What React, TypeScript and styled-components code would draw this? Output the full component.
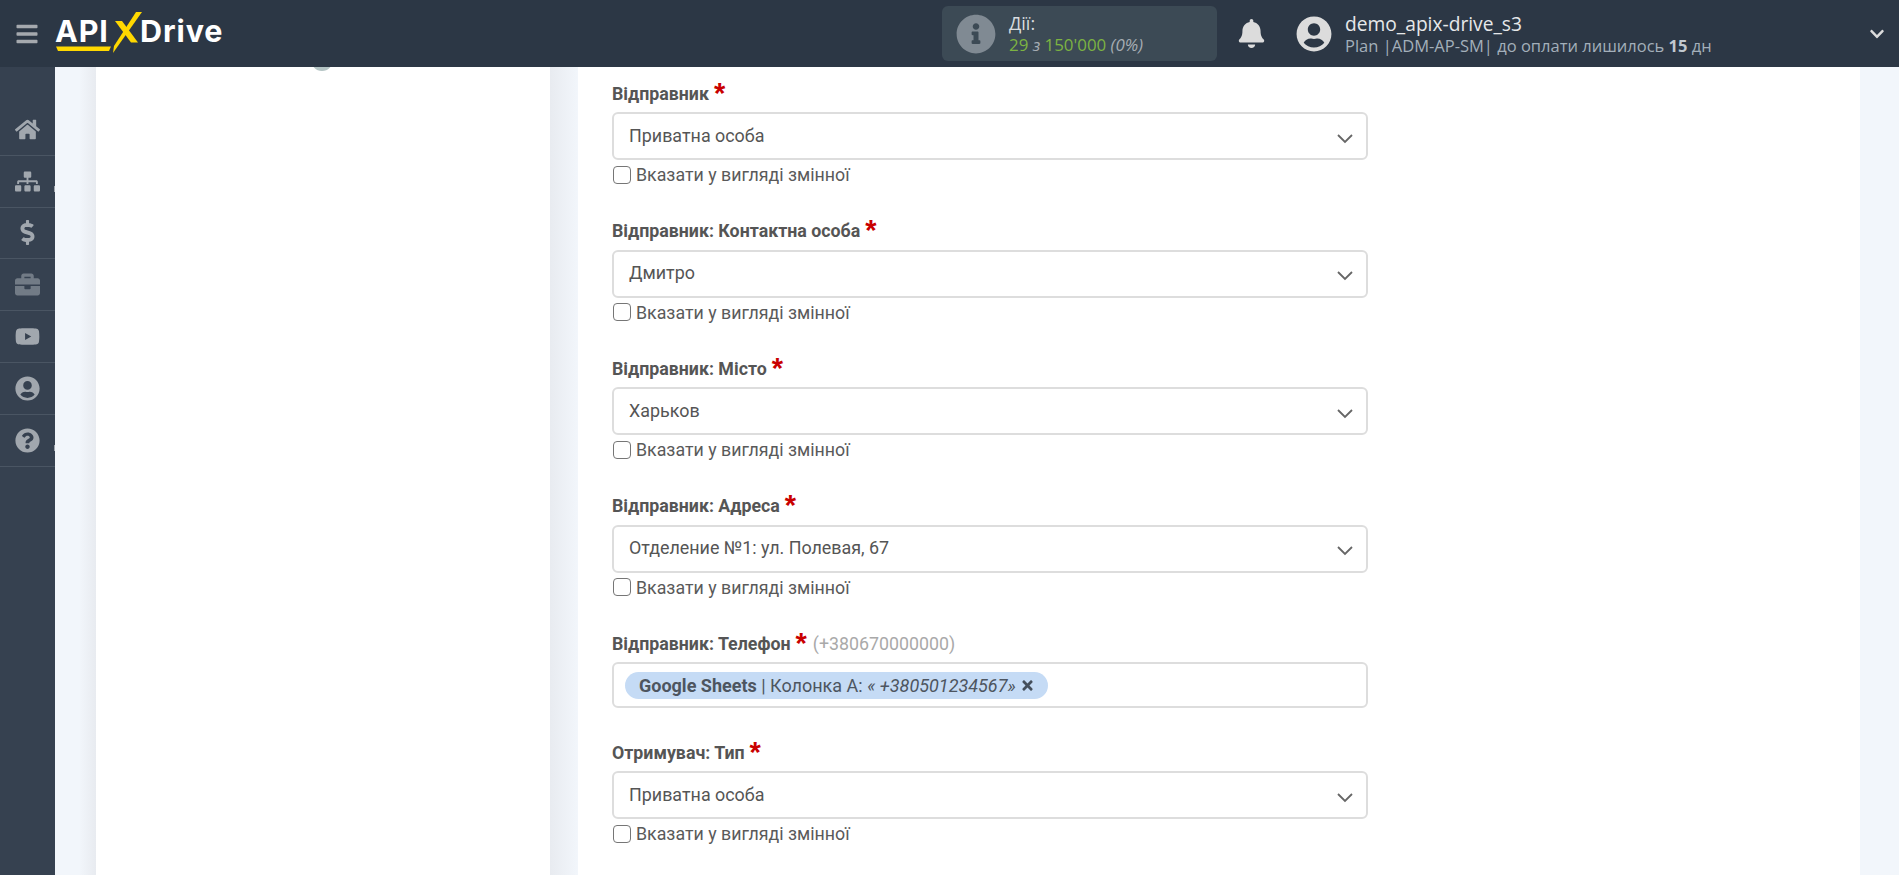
import React from "react";
import styled, { createGlobalStyle } from "styled-components";
import {
  FaBars,
  FaBell,
  FaBriefcase,
  FaChevronDown,
  FaDollarSign,
  FaHome,
  FaInfoCircle,
  FaQuestionCircle,
  FaSitemap,
  FaTimes,
  FaUserCircle,
  FaYoutube,
} from "react-icons/fa";

const Global = createGlobalStyle`
  html, body { margin: 0; padding: 0; height: 100%; overflow: hidden; }
  body { background: #f2f6fb; font-family: Roboto, "Liberation Sans", sans-serif; }
  * { box-sizing: border-box; }
`;

const Page = styled.div`
  width: 1899px;
  height: 875px;
  display: flex;
  flex-direction: column;
  overflow: hidden;
`;

const Header = styled.header`
  position: relative;
  z-index: 2;
  flex: 0 0 67px;
  display: flex;
  align-items: center;
  background: #2c3745;
  color: #fff;
`;

const Burger = styled.div`
  flex: 0 0 55px;
  display: flex;
  justify-content: center;
  color: #a5a9ae;
  font-size: 24px;
  line-height: 0;
  padding-right: 1px;
`;

const Logo = styled.div`
  position: relative;
  width: 176px;
  height: 46px;
  font-family: Inter, "Liberation Sans", sans-serif;
  font-weight: 700;
  font-size: 30.5px;
  letter-spacing: 0.9px;
  color: #fff;
`;

const LogoApi = styled.span`
  position: absolute;
  left: 0;
  top: 0;
  line-height: 40px;
`;

const LogoDrive = styled.span`
  position: absolute;
  left: 85px;
  top: 0;
  line-height: 40px;
`;

const LogoMark = styled.svg`
  position: absolute;
  left: 0;
  top: 0;
`;

const Actions = styled.div`
  margin-left: 711px;
  width: 275px;
  height: 55px;
  border-radius: 6px;
  background: #3c4a55;
  display: flex;
  align-items: center;
  padding-left: 14px;
  gap: 13px;
`;

const InfoIcon = styled.div`
  color: #808a93;
  font-size: 40px;
  line-height: 0;
`;

const ActionsText = styled.div`
  font-family: "Open Sans", sans-serif;
  font-size: 18px;
  line-height: 22px;
  color: #d8dcdf;
`;

const Counter = styled.div`
  color: #7cb342;
  font-size: 16.9px;
`;

const Muted = styled.em`
  color: #a6adb3;
  font-style: italic;
`;

const Bell = styled.div`
  margin-left: 20px;
  color: #dcdcdc;
  font-size: 29px;
  line-height: 0;
`;

const Avatar = styled.div`
  margin-left: 30px;
  color: #dcdcdc;
  font-size: 36px;
  line-height: 0;
`;

const UserInfo = styled.div`
  margin-left: 13px;
  flex: 1;
  font-family: "Open Sans", sans-serif;
`;

const UserName = styled.div`
  font-size: 19.2px;
  line-height: 24px;
  color: #e6e8ea;
`;

const UserPlan = styled.div`
  font-size: 16.5px;
  line-height: 20px;
  color: #a3afba;
  b {
    font-weight: 700;
    color: #c2c9d0;
  }
`;

const Caret = styled.div`
  color: #dcdcdc;
  font-size: 16px;
  line-height: 0;
  margin-right: 14px;
`;

const Body = styled.div`
  flex: 1;
  display: flex;
  min-height: 0;
`;

const Sidebar = styled.nav`
  flex: 0 0 55px;
  background: #364150;
  padding-top: 37px;
`;

const NavItem = styled.div<{ $dim?: boolean }>`
  position: relative;
  height: 51.8px;
  display: flex;
  align-items: center;
  justify-content: center;
  border-bottom: 1px solid #4a5563;
  color: ${(p) => (p.$dim ? "#727b86" : "#a1a7ae")};
  font-size: 25px;
  line-height: 0;
`;

const NavNotch = styled.span`
  position: absolute;
  right: 0;
  top: 30px;
  width: 1.5px;
  height: 6px;
  background: #a1a7ae;
`;

const Content = styled.main`
  flex: 1;
  min-width: 0;
  display: flex;
  padding: 0 39px 0 41px;
  gap: 28px;
  background: linear-gradient(90deg, #f2f6fb 0, #f2f6fb 24px, #e8ebf0 41px, #e8ebf0 495px, #f2f6fb 523px);
`;

const LeftPanel = styled.section`
  position: relative;
  flex: 0 0 454px;
  background: #fff;
`;

const StepDot = styled.span`
  position: absolute;
  left: 215px;
  top: -18px;
  width: 22px;
  height: 22px;
  border-radius: 50%;
  background: #b4c4c4;
`;

const FormPanel = styled.section`
  flex: 1;
  background: #fff;
  padding: 13px 0 0 34px;
`;

const Field = styled.div<{ $gap?: number }>`
  width: 756px;
  margin-bottom: ${(p) => p.$gap ?? 29.5}px;
`;

const Label = styled.div`
  height: 25px;
  margin-bottom: 7px;
  padding-top: 1px;
  display: flex;
  align-items: center;
  font-size: 17.8px;
  font-weight: 700;
  color: #555;
  white-space: nowrap;
`;

const Required = styled.span`
  color: #c90000;
  font-size: 29px;
  line-height: 25px;
  height: 25px;
  margin-left: 5px;
  font-weight: 700;
  font-family: "Liberation Sans", sans-serif;
`;

const Hint = styled.span`
  margin-left: 6px;
  font-weight: 400;
  color: #a9a9a9;
`;

const SelectBox = styled.div`
  height: 48px;
  border: 2px solid #dddddd;
  border-radius: 6px;
  background: #fff;
  display: flex;
  align-items: center;
  justify-content: space-between;
  padding: 0 13px 2px 15px;
  font-size: 17.9px;
  color: #555;
`;

const Chevron = styled.svg`
  flex: none;
  margin-top: 7.5px;
`;

const CheckRow = styled.label`
  height: 28px;
  padding-top: 1px;
  display: flex;
  align-items: center;
  gap: 5px;
  font-size: 17.8px;
  color: #5a5a5a;
`;

const CheckInput = styled.input`
  appearance: none;
  flex: none;
  width: 18px;
  height: 18px;
  margin: 0 0 0 1px;
  border: 1.5px solid #767676;
  border-radius: 4px;
  background: #fff;
`;

const TagBox = styled.div`
  height: 46px;
  border: 2px solid #dddddd;
  border-radius: 6px;
  display: flex;
  align-items: center;
  padding-left: 11px;
`;

const Tag = styled.div`
  height: 27px;
  border-radius: 14px;
  background: #c5dbf5;
  display: flex;
  align-items: center;
  padding: 0 13px 0 14px;
  font-size: 18px;
  color: #4d5560;
  white-space: pre;
  b { font-weight: 700; }
  i { font-style: italic; }
`;

const TagClose = styled.span`
  margin-left: 4px;
  font-size: 15px;
  line-height: 0;
  color: #454f5b;
`;

const SelectChevron = () => (
  <Chevron width="16" height="10" viewBox="0 0 16 10" fill="none">
    <path d="M1 1l7 7 7-7" stroke="#666" strokeWidth="1.8" />
  </Chevron>
);

const SelectField = ({ label, value }: { label: string; value: string }) => (
  <Field>
    <Label>
      {label}
      <Required>*</Required>
    </Label>
    <SelectBox>
      {value}
      <SelectChevron />
    </SelectBox>
    <CheckRow>
      <CheckInput type="checkbox" />
      Вказати у вигляді змінної
    </CheckRow>
  </Field>
);

export default function App() {
  return (
    <Page>
      <Global />
      <Header>
        <Burger>
          <FaBars />
        </Burger>
        <Logo>
          <LogoApi>API</LogoApi>
          <LogoDrive>Drive</LogoDrive>
          <LogoMark width="176" height="46" viewBox="0 0 176 46" fill="none">
            <path d="M1 35.500h55l-2 4.500H3z" fill="#ffd800" />
            <path d="M58 42l1-7L81 1h6z" fill="#ffd800" />
            <path d="M60 10h7l16 21.500h-7z" fill="#ffd800" />
          </LogoMark>
        </Logo>
        <Actions>
          <InfoIcon>
            <FaInfoCircle />
          </InfoIcon>
          <ActionsText>
            Дії:
            <Counter>
              29 <Muted>з</Muted> 150'000 <Muted>(0%)</Muted>
            </Counter>
          </ActionsText>
        </Actions>
        <Bell>
          <FaBell />
        </Bell>
        <Avatar>
          <FaUserCircle />
        </Avatar>
        <UserInfo>
          <UserName>demo_apix-drive_s3</UserName>
          <UserPlan>
            Plan |ADM-AP-SM| до оплати лишилось <b>15</b> дн
          </UserPlan>
        </UserInfo>
        <Caret>
          <FaChevronDown />
        </Caret>
      </Header>
      <Body>
        <Sidebar>
          <NavItem>
            <FaHome />
          </NavItem>
          <NavItem>
            <FaSitemap />
            <NavNotch />
          </NavItem>
          <NavItem>
            <FaDollarSign />
          </NavItem>
          <NavItem $dim>
            <FaBriefcase />
          </NavItem>
          <NavItem>
            <FaYoutube />
          </NavItem>
          <NavItem>
            <FaUserCircle />
          </NavItem>
          <NavItem>
            <FaQuestionCircle />
            <NavNotch />
          </NavItem>
        </Sidebar>
        <Content>
          <LeftPanel>
            <StepDot />
          </LeftPanel>
          <FormPanel>
            <SelectField label="Відправник" value="Приватна особа" />
            <SelectField label="Відправник: Контактна особа" value="Дмитро" />
            <SelectField label="Відправник: Місто" value="Харьков" />
            <SelectField label="Відправник: Адреса" value="Отделение №1: ул. Полевая, 67" />
            <Field $gap={31}>
              <Label>
                Відправник: Телефон
                <Required>*</Required>
                <Hint>(+380670000000)</Hint>
              </Label>
              <TagBox>
                <Tag>
                  <b>Google Sheets</b> | Колонка A: <i>« +380501234567»</i>
                  <TagClose>
                    <FaTimes />
                  </TagClose>
                </Tag>
              </TagBox>
            </Field>
            <SelectField label="Отримувач: Тип" value="Приватна особа" />
          </FormPanel>
        </Content>
      </Body>
    </Page>
  );
}
